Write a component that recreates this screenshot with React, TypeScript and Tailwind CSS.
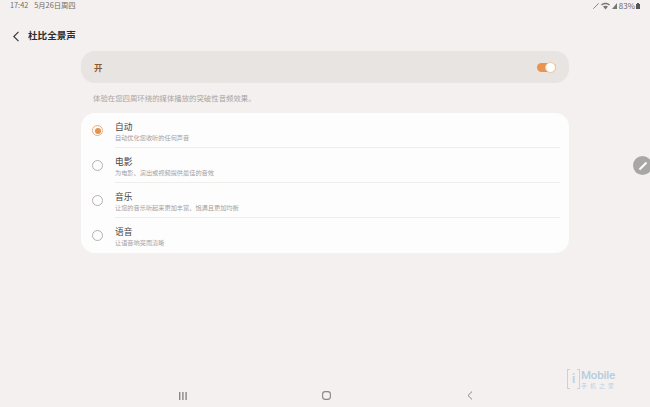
const OPTIONS = [
  { title: '自动', desc: '自动优化您收听的任何声音', selected: true },
  { title: '电影', desc: '为电影、演出或视频提供最佳的音效' },
  { title: '音乐', desc: '让您的音乐听起来更加丰富、饱满且更加均衡' },
  { title: '语音', desc: '让语音响亮而清晰' },
]

const FONT = "font-['Noto_Sans_CJK_SC','Roboto',sans-serif]"

function StatusBar() {
  return (
    <div className="flex h-[12px] items-center justify-between pl-[10px] pr-[10px] text-[7.3px] leading-none text-[#6d6a69]">
      <div className="flex gap-[6px]">
        <span>17:42</span>
        <span>5月26日周四</span>
      </div>
      <div className="flex items-center">
        <svg width="6" height="6" viewBox="0 0 6 6">
          <path d="M.3 5.7 5.7.3" stroke="#8a8786" strokeWidth="1" />
        </svg>
        <svg width="9" height="8" viewBox="0 0 9 8" fill="#777" className="ml-[2px]">
          <path d="M0 2.6C2.6 0 6.4 0 9 2.6L8 3.6C6 1.8 3 1.8 1 3.6ZM2 4.6C3.4 3.3 5.6 3.3 7 4.6L4.5 7.6Z" />
        </svg>
        <svg width="5" height="6" viewBox="0 0 5 6" fill="#777" className="ml-[2px]">
          <path d="M0 6 5 0V6Z" />
        </svg>
        <span className="ml-[2px] text-[8px]">83%</span>
        <svg width="4" height="6" viewBox="0 0 4 6" fill="#555" className="ml-[1px]">
          <path d="M1 0h2v1h1v5H0V1h1Z" />
        </svg>
      </div>
    </div>
  )
}

function Radio({ selected }: { selected?: boolean }) {
  if (selected) {
    return (
      <div className="flex h-[11px] w-[11px] items-center justify-center rounded-full border border-[#e8ad7a]">
        <div className="h-[6px] w-[6px] rounded-full bg-[#e0954f]" />
      </div>
    )
  }
  return <div className="h-[11px] w-[11px] rounded-full border border-[#b3b1b0]" />
}

export default function App() {
  return (
    <div className={`relative flex h-[407px] w-[650px] flex-col overflow-hidden bg-[#f4f0ef] ${FONT}`}>
      <StatusBar />

      <div className="mt-[15px] flex h-[18px] items-center pl-[12px]">
        <svg width="8" height="11" viewBox="0 0 8 11" fill="none">
          <path d="M6.5 .8 1.8 5.5l4.7 4.7" stroke="#333" strokeWidth="1.1" />
        </svg>
        <span className="ml-[8px] text-[9.6px] font-bold leading-none text-[#2c2c2c]">杜比全景声</span>
      </div>

      <div className="mx-[81px] mt-[6px] flex h-[32px] items-center justify-between rounded-[14px] bg-[#e8e4e2] pl-[13px] pr-[13px]">
        <span className="pt-[1px] text-[8.5px] font-bold text-[#8c5a34]">开</span>
        <div className="flex h-[9px] w-[19px] items-center justify-end rounded-full bg-[#e89450]">
          <div className="h-[11px] w-[11px] shrink-0 rounded-full border border-[#eec7a5] bg-white" />
        </div>
      </div>

      <p className="ml-[93px] mt-[10px] text-[7.4px] leading-[10px] text-[#a8a5a3]">
        体验在您四周环绕的媒体播放的突破性音频效果。
      </p>

      <div className="mx-[81px] mt-[10px] rounded-[14px] bg-[#fdfdfd]">
        {OPTIONS.map((o, i) => (
          <div key={o.title} className="flex h-[35px] items-center pl-[11px] pr-[9px]">
            <Radio selected={o.selected} />
            <div
              className={`ml-[12px] flex h-full flex-1 flex-col justify-center pt-[2px] ${
                i < OPTIONS.length - 1 ? 'border-b border-[#f0edeb]' : ''
              }`}
            >
              <span className="text-[8.7px] leading-[12px] text-[#444]">{o.title}</span>
              <span className="text-[6.2px] leading-[9px] text-[#a3a09e]">{o.desc}</span>
            </div>
          </div>
        ))}
      </div>

      <div className="absolute left-[633px] top-[156px] flex h-[19px] w-[19px] items-center justify-center rounded-full bg-[#a9a7a6]">
        <svg width="10" height="10" viewBox="0 0 10 10">
          <path d="M1.5 8.5 8.5 1.5" stroke="#fff" strokeWidth="2" />
        </svg>
      </div>

      <div className="absolute left-[567px] top-[369px] flex h-[20px] items-stretch">
        <div className="relative flex w-[13px] items-center justify-center font-['Roboto',sans-serif] text-[12px] font-bold leading-none text-[#bfd2e2]">
          <div className="absolute inset-y-0 left-0 w-[3px] border-y border-l border-[#c3d3e0]" />
          i
          <div className="absolute inset-y-0 right-0 w-[3px] border-y border-r border-[#c3d3e0]" />
        </div>
        <div className="ml-[1px] flex flex-col">
          <span className="font-['Roboto',sans-serif] text-[11.5px] font-medium leading-[12px] tracking-[-0.2px] text-[#b5cde0]">
            Mobile
          </span>
          <span className="mt-[1px] text-[6px] leading-[7px] tracking-[3px] text-[#bfd2e2]">手机之家</span>
        </div>
      </div>

      <div className="mt-auto grid h-[23px] grid-cols-3 items-center pl-[179px] pr-[177px]">
        <svg width="8" height="8" viewBox="0 0 8 8" fill="#8a8786">
          <path d="M0 0h1.4v8H0ZM3.2 0h1.4v8H3.2ZM6.4 0h1.4v8H6.4Z" />
        </svg>
        <svg width="9" height="9" viewBox="0 0 9 9" fill="none" className="justify-self-center">
          <rect x=".6" y=".6" width="7.8" height="7.8" rx="2.6" stroke="#8a8786" strokeWidth="1.1" />
        </svg>
        <svg width="6" height="9" viewBox="0 0 6 9" fill="none" className="justify-self-end">
          <path d="M5 .6 1 4.5 5 8.4" stroke="#8a8786" strokeWidth="1" />
        </svg>
      </div>
    </div>
  )
}
